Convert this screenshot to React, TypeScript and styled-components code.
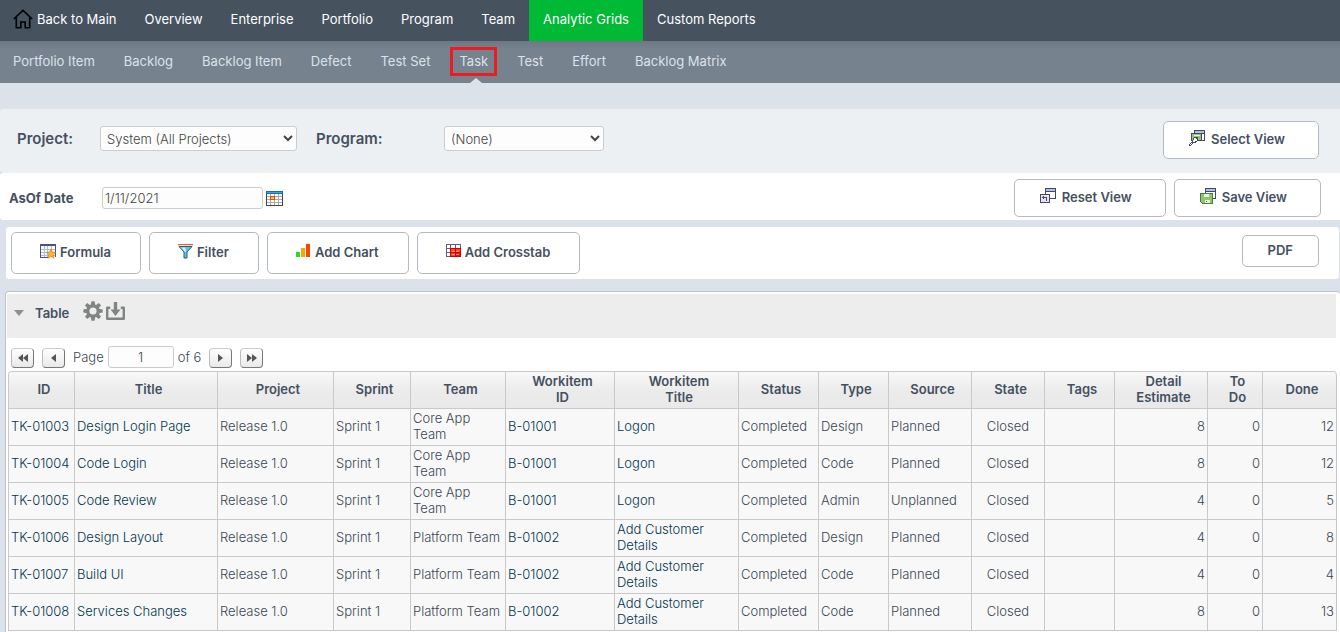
import React from "react";
import styled, { createGlobalStyle } from "styled-components";

const GlobalStyle = createGlobalStyle`
  * { box-sizing: border-box; }
  html, body { margin: 0; background: #dbe2ea; }
  body, button, input, select {
    font-family: Inter, "Liberation Sans", sans-serif;
    font-size: 13px;
    font-weight: 300;
    line-height: 16px;
    color: #3a4655;
  }
  a { text-decoration: none; }
`;

const Page = styled.div`
  display: flex;
  flex-direction: column;
  min-height: 100vh;
`;

const MainNav = styled.nav`
  display: flex;
  height: 41px;
  background: #47525f;
`;

const MainLink = styled.a<{ $active?: boolean }>`
  display: flex;
  align-items: center;
  gap: 4px;
  padding: 0 14px 3px;
  color: #fff;
  font-weight: 400;
  white-space: nowrap;
  background: ${(p) => (p.$active ? "#00b935" : "transparent")};
  &:first-child { padding-left: 13px; }
`;

const SubNav = styled.nav`
  display: flex;
  height: 42px;
  padding-left: 13px;
  gap: 29px;
  background: linear-gradient(#6d7884, #77828f 8px);
`;

const SubLink = styled.a<{ $current?: boolean }>`
  position: relative;
  display: flex;
  align-items: center;
  padding-bottom: 2px;
  color: #dbe2ea;
  font-weight: 400;
  white-space: nowrap;
  ${(p) =>
    p.$current &&
    `
    &::before {
      content: "";
      position: absolute;
      inset: 6px -9px 7px;
      border: 3px solid #ed1c24;
    }
    &::after {
      content: "";
      position: absolute;
      left: 50%;
      bottom: 0;
      margin-left: -4px;
      border: 6px solid transparent;
      border-top: 0;
      border-bottom: 5px solid #dbe2ea;
    }
  `}
`;

const ProjectBar = styled.section`
  display: flex;
  align-items: flex-start;
  margin-top: 26px;
  padding: 12px 21px 14px 17px;
  background: #ecf0f3;
  border-radius: 3px 0 0 3px;
`;

const DateBar = styled.section`
  display: flex;
  align-items: flex-start;
  gap: 8px;
  padding: 6px 19px 3px 9px;
  background: #fff;
  border-radius: 3px 0 0 3px;
`;

const Field = styled.div<{ $height: number }>`
  display: flex;
  align-items: center;
  height: ${(p) => p.$height}px;
`;

const FieldLabel = styled.label<{ $width: number; $large?: boolean }>`
  width: ${(p) => p.$width}px;
  color: #44505f;
  font-weight: ${(p) => (p.$large ? 600 : 700)};
  font-size: ${(p) => (p.$large ? 15 : 13)}px;
`;

const Select = styled.select<{ $width: number }>`
  width: ${(p) => p.$width}px;
  height: 25px;
  margin-right: 19px;
  padding: 0 2px;
  color: #444;
  background: #fdfdfd;
  border: 1px solid #ccc;
  border-radius: 3px;
`;

const TextInput = styled.input<{ $width: number; $center?: boolean }>`
  width: ${(p) => p.$width}px;
  height: 22px;
  padding: 0 2px;
  color: #444;
  background: #fdfdfd;
  border: 1px solid #ccc;
  border-radius: 3px;
  text-align: ${(p) => (p.$center ? "center" : "left")};
`;

const IconButton = styled.button`
  display: flex;
  margin-left: 3px;
  padding: 0;
  border: 0;
  background: none;
`;

const Spacer = styled.div`
  flex: 1;
`;

const Button = styled.button`
  display: flex;
  align-items: center;
  justify-content: center;
  color: #44505f;
  font-weight: 600;
  white-space: nowrap;
  background: #fff;
  border: 1px solid #b4bac3;
  border-radius: 5px;
`;

const ViewButton = styled(Button)`
  height: 38px;
  gap: 6px;
  padding: 0 33px 2px 25px;
  svg { margin-bottom: 2px; }
`;

const ToolButton = styled(Button)`
  height: 42px;
  gap: 4px;
  padding: 0 29px 2px 28px;
  svg { margin-bottom: 2px; }
`;

const PdfButton = styled(Button)`
  height: 32px;
  margin-top: 3px;
  padding: 0 25px 2px;
`;

const Toolbar = styled.section`
  display: flex;
  align-items: flex-start;
  gap: 8px;
  margin: 7px 1px 12px 6px;
  padding: 5px 20px 5px 5px;
  background: #fff;
  border-radius: 3px;
`;

const Panel = styled.section`
  flex: 1;
  margin-left: 5px;
  padding: 2px 3px 0 1px;
  background: #fff;
  border: solid #bfc1c3;
  border-width: 1px 0 0 1px;
  border-radius: 4px 4px 0 0;
`;

const PanelHeader = styled.header`
  display: flex;
  align-items: center;
  height: 44px;
  margin-right: 1px;
  padding: 0 7px 7px;
  background: #ededed;
`;

const PanelTitle = styled.h2`
  margin: 0 11px 0 11px;
  color: #44505f;
  font-size: 13px;
  font-weight: 600;
`;

const HeaderTools = styled.div`
  display: flex;
  align-items: center;
  padding-bottom: 3px;
`;

const Pager = styled.div`
  display: flex;
  align-items: center;
  gap: 8px;
  height: 33px;
  padding: 5px 4px 0;
`;

const PageField = styled.label`
  display: flex;
  align-items: center;
  gap: 4px;
`;

const PagerButton = styled.button`
  display: flex;
  align-items: center;
  justify-content: center;
  width: 23px;
  height: 20px;
  margin-top: 2px;
  padding: 0;
  background: linear-gradient(#fff, #e9e9e9);
  border: 1px solid;
  border-color: #ccc #777 #777 #bbb;
  border-radius: 4px;
`;

const Grid = styled.table`
  width: calc(100% - 1px);
  margin-left: 1px;
  table-layout: fixed;
  border-collapse: separate;
  border-spacing: 0;
  border: solid #c9c9c9;
  border-width: 1px 0 0 1px;
  border-radius: 4px 4px 0 0;
`;

const HeadCell = styled.th`
  height: 37px;
  padding: 0 3px 3px 8px;
  color: #44505f;
  font-weight: 600;
  background: linear-gradient(#f8f8f8, #ebebeb 55%, #e9e9e9);
  border: solid #c9c9c9;
  border-width: 0 1px 1px 0;
  &:first-child { border-top-left-radius: 3px; }
  &:last-child { border-top-right-radius: 4px; }
`;

const Cell = styled.td<{ $align: string }>`
  height: 37px;
  padding: 0 2px 2px;
  text-align: ${(p) => p.$align};
  background: #f8f8f8;
  border: solid #c9c9c9;
  border-width: 0 1px 1px 0;
`;

const GridLink = styled.a`
  color: #00364f;
`;

const HomeIcon = () => (
  <svg width="20" height="20" viewBox="0 0 20 20" fill="none" stroke="#000" strokeWidth="1.6">
    <path d="M0.8 10 10 1.3 19.2 10M3.3 8.5V18.8H7.8V13H12.2V18.8H16.7V8.5" />
  </svg>
);

const CalendarIcon = () => (
  <svg width="17" height="15" viewBox="0 0 17 15" shapeRendering="crispEdges">
    <path fill="#fff" d="M0 0h17v15H0z" />
    <path fill="#0d72ad" d="M0 0h17v3H0z" />
    <path fill="#3ba7dc" d="M1 1h15v1H1z" />
    <path fill="#aaa" d="M1 5h15v1H1zM1 8h15v1H1zM1 11h15v1H1zM4 3h1v11H4zM8 3h1v11H8zM12 3h1v11h-1z" />
    <path fill="#444" d="M0 3h1v12H0zM16 3h1v12h-1zM0 14h17v1H0z" />
    <path fill="#f04b00" d="M4 5h5v4H4z" />
    <path fill="#ffc24b" d="M5 6h3v2H5z" />
  </svg>
);

const FormulaIcon = () => (
  <svg width="16" height="15" viewBox="0 0 16 15">
    <g shapeRendering="crispEdges">
      <path fill="#f5f9fd" d="M0 0h16v13H0z" />
      <path fill="#a9bfd6" d="M1 5h14v1H1zM1 8h14v1H1zM1 11h14v1H1zM4 2h1v11H4zM7 2h1v11H7zM11 2h1v11h-1z" />
      <path fill="#51507a" d="M0 0h16v2H0zM0 2h1v12H0zM15 2h1v11h-1zM0 13h8v1H0z" />
    </g>
    <path fill="#ffb32b" stroke="#d98412" strokeWidth=".7" d="m11 5 1.4 3 3.2.4-2.3 2.2.6 3.6-2.9-1.8-2.9 1.8.6-3.6-2.3-2.2 3.2-.4z" />
  </svg>
);

const FilterIcon = () => (
  <svg width="15" height="15" viewBox="0 0 15 15">
    <path fill="#f2590c" d="M0 0h15v1.2H0z" />
    <path fill="#55c7ea" stroke="#33557c" d="M1 2.5h13L9 8v6H6V8z" />
    <path fill="#d5f4ff" d="M3.3 3.4h4L8 8H7z" />
  </svg>
);

const ChartIcon = () => (
  <svg width="15" height="14" viewBox="0 0 15 14" shapeRendering="crispEdges">
    <path fill="#1fdc39" d="M0 8h4v5H0z" />
    <path fill="#f2a900" d="M5 4h4v9H5z" />
    <path fill="#ff4300" d="M10 0h4v13h-4z" />
  </svg>
);

const CrosstabIcon = () => (
  <svg width="15" height="14" viewBox="0 0 15 14" shapeRendering="crispEdges">
    <path fill="#fff" d="M0 0h15v13H0z" />
    <path fill="#665b84" d="M0 0h15v1H0zM0 12h5v1H0zM0 0h1v13H0zM4 0h1v13H4zM9 0h1v4H9zM14 0h1v4h-1zM0 4h5v1H0zM0 8h5v1H0z" />
    <path fill="#d50000" d="M4 4h11v9H4z" />
    <path fill="#ff4a20" d="M5 5h4v3H5zM10 5h4v3h-4zM5 9h4v3H5z" />
    <path fill="#ff0b00" d="M10 9h4v3h-4z" />
    <path fill="#ffa080" d="M6 7h3v1H6zM10 7h3v1h-3zM6 10h3v1H6zM10 10h3v1h-3z" />
  </svg>
);

const BackWindow = () => (
  <>
    <path fill="#4b426e" d="M5 0h11v11H5z" />
    <path fill="#fff" d="M6 1h9v9H6z" />
    <path fill="#a5c8df" d="M6 1h9v2H6z" />
    <path fill="#4b426e" d="M6 3h9v1H6z" />
  </>
);

const SelectViewIcon = () => (
  <svg width="16" height="16" viewBox="0 0 16 16" shapeRendering="crispEdges">
    <BackWindow />
    <path fill="#4b426e" d="M2 3h11v8H2z" />
    <path fill="#8cc66d" d="M3 4h9v6H3z" />
    <path fill="#e9f7df" d="M5 5h6v1H5z" />
    <path fill="#4b426e" d="M5 7h4v4H8v1H7v1H4v1H3v1H2v1H0v-2h1v-1h1v-1h1v-2h1V8h1z" />
    <path fill="#fff" d="M5 8h2v1h1v2H6v1H4v-2h1zM1 14h1v-1h1v1H2v1H1z" />
  </svg>
);

const ResetViewIcon = () => (
  <svg width="16" height="16" viewBox="0 0 16 16" shapeRendering="crispEdges">
    <BackWindow />
    <path fill="#4b426e" d="M0 6h10v9H0z" />
    <path fill="#e5e5ec" d="M1 7h8v7H1z" />
    <path fill="#4b426e" d="M2 9h5v1H2zM3 8h1v3H3zM6 10h1v3H6z" />
  </svg>
);

const SaveViewIcon = () => (
  <svg width="16" height="16" viewBox="0 0 16 16" shapeRendering="crispEdges">
    <BackWindow />
    <path fill="#4c7a44" d="M0 5h13v11H2L0 14z" />
    <path fill="#8cc66d" d="M1 6h11v9H2L1 14z" />
    <path fill="#e9f7df" d="M4 6h5v3H4zM5 12h5v3H5z" />
    <path fill="#4c7a44" d="M6 13h1v1H6z" />
  </svg>
);

const CollapseIcon = () => (
  <svg width="10" height="6" viewBox="0 0 10 6">
    <path fill="#8f8f8f" d="M0 0h10L5 6z" />
  </svg>
);

const GearIcon = () => (
  <svg width="20" height="20" viewBox="0 0 20 20">
    <g fill="#808583">
      {[0, 45, 90, 135].map((angle) => (
        <path key={angle} d="M8.4 0.3h3.2l.6 4v11.4l-.6 4H8.4l-.6-4V4.3z" transform={`rotate(${angle} 10 10)`} />
      ))}
      <circle cx="10" cy="10" r="6.8" />
    </g>
    <circle cx="10" cy="10" r="3.6" fill="#ededed" />
  </svg>
);

const DownloadIcon = () => (
  <svg width="19" height="18" viewBox="0 0 19 18">
    <path fill="none" stroke="#808583" strokeWidth="2.4" strokeLinejoin="round" d="M4.2 5.7H1.2V16.8H17.8V5.7H14.8" />
    <path fill="#808583" d="M7.8 0h3.4v7.5h3.3L9.5 14 4.5 7.5h3.3z" />
  </svg>
);

const Arrows = ({ count, flip }: { count: number; flip?: boolean }) => (
  <svg width={count * 5} height="8" viewBox={`0 0 ${count * 5} 8`}>
    <g fill="#555" transform={flip ? `translate(${count * 5} 0) scale(-1 1)` : undefined}>
      <path d="M5 0v8L0 4z" />
      {count > 1 && <path d="M10 0v8L5 4z" />}
    </g>
  </svg>
);

const mainItems = ["Overview", "Enterprise", "Portfolio", "Program", "Team", "Analytic Grids", "Custom Reports"];
const subItems = ["Portfolio Item", "Backlog", "Backlog Item", "Defect", "Test Set", "Task", "Test", "Effort", "Backlog Matrix"];

type Column = { name: string; width?: number; align?: string; link?: boolean };
const columns: Column[] = [
  { name: "ID", width: 66, link: true },
  { name: "Title", width: 143, link: true },
  { name: "Project", width: 116 },
  { name: "Sprint", width: 77 },
  { name: "Team", width: 95 },
  { name: "Workitem\nID", width: 109, link: true },
  { name: "Workitem\nTitle", width: 124, link: true },
  { name: "Status", width: 80 },
  { name: "Type", width: 70 },
  { name: "Source", width: 83 },
  { name: "State", width: 73, align: "center" },
  { name: "Tags", width: 70 },
  { name: "Detail\nEstimate", width: 93, align: "right" },
  { name: "To\nDo", width: 55, align: "right" },
  { name: "Done", align: "right" },
];

const rows = [
  ["TK-01003", "Design Login Page", "Release 1.0", "Sprint 1", "Core App\nTeam", "B-01001", "Logon", "Completed", "Design", "Planned", "Closed", "", "8", "0", "12"],
  ["TK-01004", "Code Login", "Release 1.0", "Sprint 1", "Core App\nTeam", "B-01001", "Logon", "Completed", "Code", "Planned", "Closed", "", "8", "0", "12"],
  ["TK-01005", "Code Review", "Release 1.0", "Sprint 1", "Core App\nTeam", "B-01001", "Logon", "Completed", "Admin", "Unplanned", "Closed", "", "4", "0", "5"],
  ["TK-01006", "Design Layout", "Release 1.0", "Sprint 1", "Platform Team", "B-01002", "Add Customer\nDetails", "Completed", "Design", "Planned", "Closed", "", "4", "0", "8"],
  ["TK-01007", "Build UI", "Release 1.0", "Sprint 1", "Platform Team", "B-01002", "Add Customer\nDetails", "Completed", "Code", "Planned", "Closed", "", "4", "0", "4"],
  ["TK-01008", "Services Changes", "Release 1.0", "Sprint 1", "Platform Team", "B-01002", "Add Customer\nDetails", "Completed", "Code", "Planned", "Closed", "", "8", "0", "13"],
];

const Lines = ({ text }: { text: string }) => (
  <>
    {text.split("\n").map((line, i) => (
      <React.Fragment key={line}>
        {i > 0 && <br />}
        {line}
      </React.Fragment>
    ))}
  </>
);

export default function App() {
  return (
    <Page>
      <GlobalStyle />
      <MainNav>
        <MainLink href="#main">
          <HomeIcon />
          Back to Main
        </MainLink>
        {mainItems.map((item) => (
          <MainLink key={item} href="#" $active={item === "Analytic Grids"}>
            {item}
          </MainLink>
        ))}
      </MainNav>
      <SubNav>
        {subItems.map((item) => (
          <SubLink key={item} href="#" $current={item === "Task"}>
            {item}
          </SubLink>
        ))}
      </SubNav>

      <ProjectBar>
        <Field $height={35}>
          <FieldLabel htmlFor="project" $width={83} $large>Project:</FieldLabel>
          <Select id="project" $width={197}>
            <option>System (All Projects)</option>
          </Select>
          <FieldLabel htmlFor="program" $width={128} $large>Program:</FieldLabel>
          <Select id="program" $width={160}>
            <option>(None)</option>
          </Select>
        </Field>
        <Spacer />
        <ViewButton><SelectViewIcon />Select View</ViewButton>
      </ProjectBar>

      <DateBar>
        <Field $height={38}>
          <FieldLabel htmlFor="asof" $width={93}>AsOf Date</FieldLabel>
          <TextInput id="asof" $width={161} defaultValue="1/11/2021" />
          <IconButton aria-label="Choose date"><CalendarIcon /></IconButton>
        </Field>
        <Spacer />
        <ViewButton><ResetViewIcon />Reset View</ViewButton>
        <ViewButton><SaveViewIcon />Save View</ViewButton>
      </DateBar>

      <Toolbar>
        <ToolButton><FormulaIcon />Formula</ToolButton>
        <ToolButton><FilterIcon />Filter</ToolButton>
        <ToolButton><ChartIcon />Add Chart</ToolButton>
        <ToolButton><CrosstabIcon />Add Crosstab</ToolButton>
        <Spacer />
        <PdfButton>PDF</PdfButton>
      </Toolbar>

      <Panel>
        <PanelHeader>
          <CollapseIcon />
          <PanelTitle>Table</PanelTitle>
          <HeaderTools>
            <IconButton aria-label="Settings"><GearIcon /></IconButton>
            <IconButton aria-label="Download"><DownloadIcon /></IconButton>
          </HeaderTools>
        </PanelHeader>
        <Pager>
          <PagerButton aria-label="First page"><Arrows count={2} /></PagerButton>
          <PagerButton aria-label="Previous page"><Arrows count={1} /></PagerButton>
          <PageField>
            Page
            <TextInput $width={66} $center defaultValue="1" />
            of 6
          </PageField>
          <PagerButton aria-label="Next page"><Arrows count={1} flip /></PagerButton>
          <PagerButton aria-label="Last page"><Arrows count={2} flip /></PagerButton>
        </Pager>
        <Grid>
          <colgroup>
            {columns.map((c) => (
              <col key={c.name} width={c.width} />
            ))}
          </colgroup>
          <thead>
            <tr>
              {columns.map((c) => (
                <HeadCell key={c.name} scope="col"><Lines text={c.name} /></HeadCell>
              ))}
            </tr>
          </thead>
          <tbody>
            {rows.map((row) => (
              <tr key={row[0]}>
                {row.map((value, i) => (
                  <Cell key={columns[i].name} $align={columns[i].align ?? "left"}>
                    {columns[i].link ? <GridLink href="#"><Lines text={value} /></GridLink> : <Lines text={value} />}
                  </Cell>
                ))}
              </tr>
            ))}
          </tbody>
        </Grid>
      </Panel>
    </Page>
  );
}
